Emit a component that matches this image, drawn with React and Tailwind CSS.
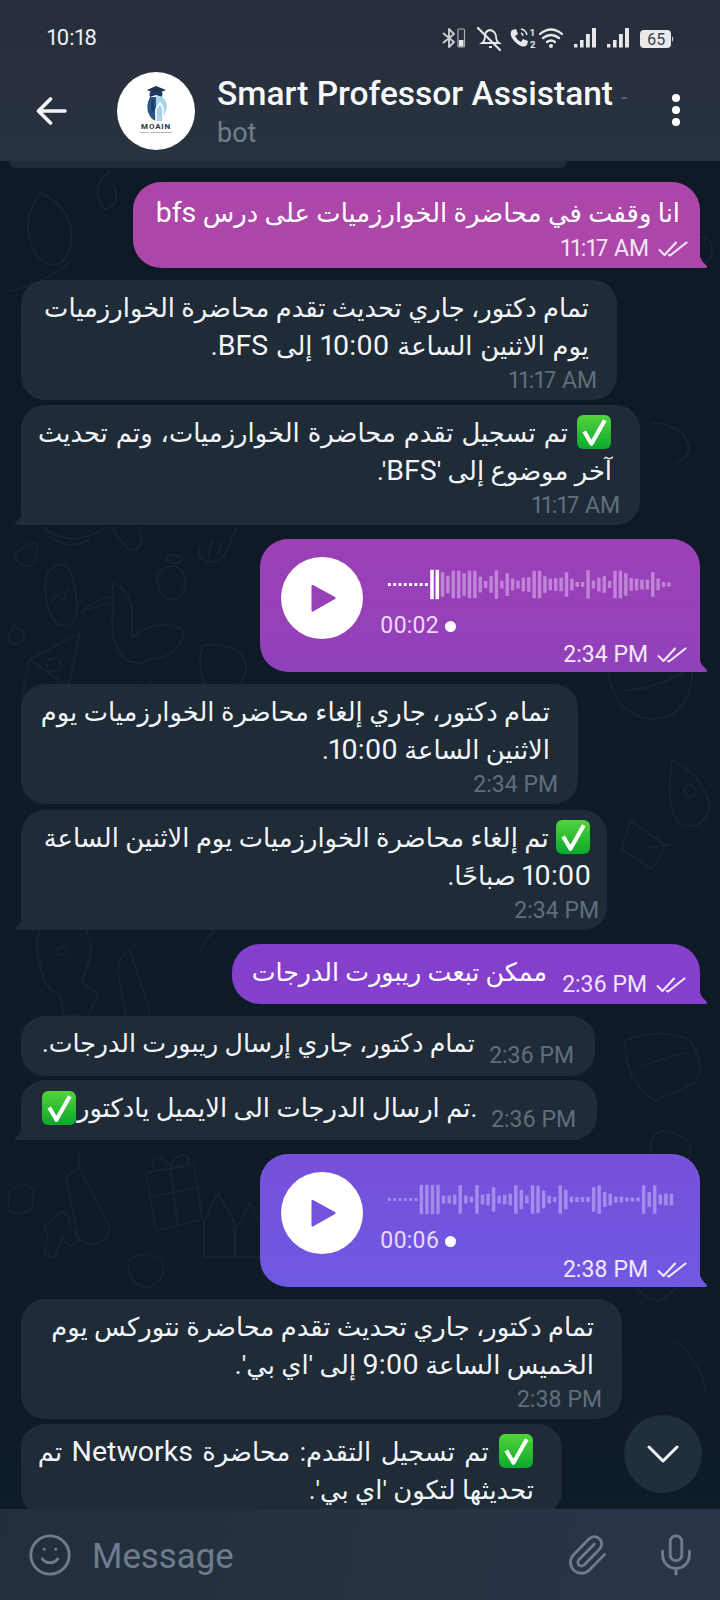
import React from "react";
import { Smile, Mic, Paperclip } from "lucide-react";

const F = "font-['Roboto','DejaVu_Sans',sans-serif] proportional-nums";

function L({ children }) {
  return <span className="text-[28.5px]">{children}</span>;
}

function Checks({ color = "#f3e6f6" }) {
  return (
    <svg width="30" height="16" viewBox="0 0 30 16" fill="none" stroke={color} strokeWidth="2.1" strokeLinecap="round" strokeLinejoin="round" className="shrink-0">
      <path d="M1.5 9 L6.5 14 L18 1.5" />
      <path d="M11 14 L12 14.5 L28.5 1.5" />
    </svg>
  );
}

function Done() {
  return (
    <svg width="36" height="36" viewBox="0 0 35 35" className="inline-block align-[-8px] shrink-0">
      <defs>
        <linearGradient id="dg" x1="0" y1="0" x2="0" y2="1">
          <stop offset="0" stopColor="#52d43a" />
          <stop offset="1" stopColor="#0ca82c" />
        </linearGradient>
      </defs>
      <rect x="1" y="1" width="33" height="33" rx="6" fill="url(#dg)" />
      <path d="M8 17 L15 29 L28 6" fill="none" stroke="#fff" strokeWidth="4" strokeLinejoin="round" />
    </svg>
  );
}

function SentTail({ color }) {
  return (
    <svg width="12" height="24" viewBox="0 0 12 24" className="absolute right-[-9px] bottom-0">
      <path d="M0 0 C1 10 4 17 9 21 Q11.5 24 8 24 L0 24 Z" fill={color} />
    </svg>
  );
}

function RecvTail() {
  return (
    <svg width="12" height="22" viewBox="0 0 12 22" className="absolute left-[-8px] bottom-0">
      <path d="M12 0 C11 9 8 15 3 19 Q0 22 4 22 L12 22 Z" fill="#1f2b37" />
    </svg>
  );
}

function Time({ children, className = "" }) {
  return <span className={`text-[23px] leading-[26px] whitespace-nowrap ${className}`}>{children}</span>;
}

function Recv({ w, mt, lines, time, tail, pr = "pr-[20px]" }) {
  return (
    <div className={`relative ${w} ${mt} ml-[21px] bg-[#1f2b37] rounded-[24px] ${tail ? "rounded-bl-[4px]" : ""} pl-[22px] ${pr} pt-[9px] pb-[6px]`}>
      {lines.map((l, i) => (
        <div key={i} dir="rtl" className="pr-[8px] text-[25.8px] leading-[38px] text-[#f2f5f7] whitespace-nowrap">{l}</div>
      ))}
      {time && (
        <div className="mt-[3px] flex justify-end">
          <Time className="text-[#5f6f7d]">{time}</Time>
        </div>
      )}
      {tail && <RecvTail />}
    </div>
  );
}

function Recv1({ w, mt, children, time, tail }) {
  return (
    <div className={`relative ${w} ${mt} ml-[21px] h-[60px] bg-[#1f2b37] rounded-[24px] ${tail ? "rounded-bl-[4px]" : ""} pl-[21px] pr-[21px] flex items-start justify-between`}>
      <div className="leading-[38px] text-[#f2f5f7] whitespace-nowrap pt-[9px]">{children}</div>
      <Time className="text-[#5f6f7d] pt-[27px]">{time}</Time>
      {tail && <RecvTail />}
    </div>
  );
}

function Wave({ dots, played, bars, fill, dotFill, step }) {
  let x = 10;
  const items = [];
  for (let i = 0; i < dots; i++) {
    items.push(<rect key={"d" + i} x={x} y={23.5} width="3" height="3" fill={dotFill} />);
    x += 5.4;
  }
  played.forEach((h, i) => {
    items.push(<rect key={"p" + i} x={x} y={25 - h / 2} width="3.6" height={h} fill="#ffffff" />);
    x += 5.4;
  });
  bars.forEach((h, i) => {
    items.push(<rect key={"b" + i} x={x} y={25 - h / 2} width="3.5" height={h} fill={fill} />);
    x += step;
  });
  return (
    <svg width="310" height="50" viewBox="0 0 310 50" className="block">{items}</svg>
  );
}

function Voice({ mt, bg, tail, playColor, meta, dur, wave, durColor }) {
  return (
    <div className={`relative ${mt} ml-[260px] w-[440px] h-[133px] rounded-[28px] rounded-br-[4px] ${bg} pl-[21px] pt-[18px]`}>
      <div className="flex h-[82px]">
        <div className="w-[82px] h-[82px] rounded-full bg-white flex items-center justify-center shrink-0">
          <svg width="28" height="32" viewBox="0 0 28 32" className="ml-[4px]">
            <path d="M3 3 L25 15 Q26.5 16 25 17 L3 29.5 Q1.5 30 1.5 28.5 L1.5 4 Q1.5 2.5 3 3Z" fill={playColor} />
          </svg>
        </div>
        <div className="ml-[12px] flex flex-col pt-[3px]">
          <Wave {...wave} />
          <div className="mt-[4px] ml-[5px] flex items-center">
            <span className={`text-[23px] leading-[26px] ${durColor}`}>{dur}</span>
            <span className="ml-[6px] w-[11px] h-[11px] rounded-full bg-white" />
          </div>
        </div>
      </div>
      <div className="mt-[3px] mr-[13px] flex justify-end items-center gap-[9px]">
        <Time className="text-[#f4e9f7]">{meta}</Time>
        <Checks />
      </div>
      <SentTail color={tail} />
    </div>
  );
}

function Doodles() {
  return (
    <svg width="720" height="1347" viewBox="0 0 720 1347" className="absolute left-0 top-0" fill="none" stroke="#18242f" strokeWidth="1.6" strokeLinecap="round" strokeLinejoin="round">
      {/* planet & scribbles top */}
      <path d="M40 32 q-22 30 -4 62 q24 22 34 -6 q8 -40 -30 -56z" />
      <path d="M110 10 q-22 16 -6 38 q18 -4 10 -22" />
      <path d="M10 130 q40 -10 60 -30" />
      {/* arcs under bubble */}
      <path d="M42 366 q30 22 62 2 M50 376 q20 14 40 2" />
      <path d="M112 366 q16 28 24 22 q10 -6 2 -24" />
      {/* bulb */}
      <path d="M200 386 q-4 10 6 14 q16 4 22 -14 l8 -18 M212 380 l-4 14 M222 380 l-4 14" />
      {/* leaf */}
      <path d="M14 395 q14 -16 22 -12 q4 14 -6 22 q-10 2 -16 -10z" />
      <g transform="translate(0 40)">
        {/* egg */}
        <path d="M62 363 q-20 2 -16 32 q4 30 20 30 q14 -2 10 -30 q-4 -32 -14 -32z" />
        <path d="M52 400 l6 -8 l4 8 l6 -12" />
      </g>
      <g transform="translate(-10 50)">
        {/* flower pot */}
        <path d="M170 360 q12 -10 22 0 q8 12 -2 26 q-14 6 -20 -6 q-6 -12 0 -20z" />
        <path d="M176 348 q4 -8 10 -2 q6 -4 6 4 q-8 6 -16 -2z" />
      </g>
      {/* duck */}
      <g transform="translate(0 50)">
        <path d="M112 372 q18 6 20 30 l0 24 q18 -14 38 -12 q14 2 14 10 q-8 22 -32 24 q-22 10 -32 -6 q-8 -12 -8 -30 l2 -24 q-2 -14 -2 -16z" />
        <path d="M110 386 q-16 4 -28 14 l28 -8" />
        <path d="M142 470 l-4 24 M150 470 l16 26" />
      </g>
      {/* star & pizza */}
      <path d="M14 464 l6 6 l4 -2 l0 10 l-8 6 l-8 -4 l2 -8z" />
      <path d="M30 498 l50 -26 l-12 54 z" />
      <circle cx="54" cy="504" r="7" />
      <path d="M22 536 q4 -26 8 -38" />
      {/* planet near voice */}
      <path d="M204 484 q24 -2 36 8 q14 18 -4 34 q-22 14 -32 -4 q-8 -22 0 -38z" />
      {/* right side */}
      <path d="M660 30 q30 6 40 34" />
      <path d="M690 80 q10 -8 20 0 q6 12 -4 22" />
      <path d="M652 262 q18 0 30 10 q16 20 -6 30" />
      <path d="M672 600 q28 10 38 44 q-6 26 -28 20 q-18 -14 -10 -64z" />
      <circle cx="690" cy="630" r="6" />
      <path d="M630 660 l36 24 l-14 24 l-30 -20z" />
      <path d="M650 686 l20 -2" />
      {/* lamp, ball right */}
      <path d="M615 480 q40 -14 70 10 q18 30 -8 60 q-30 18 -56 -6 q-22 -32 -6 -64z" />
      <path d="M624 530 q40 -4 68 -24" />
      {/* dinosaur */}
      <path d="M40 770 q12 -16 32 -12 q22 8 18 38 l-8 26 l16 10 l-10 24 l-24 -2 l-4 -20 q-16 -6 -20 -30 q-6 -22 0 -34z" />
      <circle cx="62" cy="790" r="4" />
      <path d="M20 870 q24 -14 38 0" />
      {/* center toy under grades */}
      <path d="M130 790 l18 54 q4 14 -8 18 l-14 -4 l-8 -48 q0 -16 12 -20z" />
      <path d="M200 790 q20 -40 70 -50" />
      {/* pizza right */}
      <path d="M625 880 q30 -14 64 -2 q18 24 6 44 l-40 18 q-30 -20 -30 -60z" />
      <path d="M644 904 l40 -12" />
      <path d="M660 970 q-16 10 -6 28 q4 12 4 22 l20 0 q6 -14 12 -24 q6 -22 -30 -26z" />
      {/* gift */}
      <path d="M146 1012 l48 -10 l8 56 l-46 12z M170 1006 l8 60 M148 1036 l52 -10" />
      <path d="M170 1004 q-14 -14 -18 0 q4 8 18 4 q6 -18 18 -12 q4 10 -18 12" />
      {/* marker */}
      <path d="M78 1005 l28 54 q8 16 -6 22 q-14 6 -22 -6 l-12 -58z" />
      <path d="M80 1006 l-2 -14" />
      {/* cake */}
      <path d="M10 1030 q14 -12 24 0 l-2 18 q-12 8 -24 2z" />
      <path d="M44 1065 l12 -10 q6 -8 12 0 l2 10 l10 14 l-10 6 l-8 -8 l-8 20 l-10 -4 l4 -18z" />
      {/* castle */}
      <path d="M204 1060 l14 -28 l16 28 l0 36 l-30 0z M236 1068 l14 -26 l14 26 l0 28 l-28 0z" />
      {/* planet small */}
      <path d="M128 1100 q18 -14 34 0 q6 18 -12 26 q-22 0 -22 -26z" />
      {/* bottom right */}
      <path d="M640 1060 q30 10 40 40 q8 26 -22 40 q-26 -6 -30 -34 q0 -26 12 -46z" />
      <path d="M676 1180 q24 20 30 50" />
    </svg>
  );
}

function StatusIcons() {
  return (
    <svg width="240" height="26" viewBox="0 0 240 26" className="block" fill="none">
      {/* bluetooth + small battery */}
      <path d="M3 8 L14 17 L9 22 L9 4 L14 9 L3 18" stroke="#c9ced3" strokeWidth="1.9" strokeLinejoin="round" />
      <rect x="18" y="4" width="6.5" height="18" rx="1" stroke="#a9afb6" strokeWidth="1.2" />
      <rect x="19" y="15" width="4.5" height="6.5" fill="#e6e8ea" />
      {/* bell off */}
      <path d="M42 18 q3 -2 3 -7 q0 -5 5 -6 q5 1 6 6 q0 5 3 7z" stroke="#e6e8ea" strokeWidth="1.8" />
      <path d="M38 3 L60 25" stroke="#e6e8ea" strokeWidth="2.2" strokeLinecap="round" />
      <path d="M49 22 h3" stroke="#e6e8ea" strokeWidth="2" />
      {/* phone */}
      <path d="M72 5 l4 -1 l2 5 l-3 2 q2 4 6 6 l2 -3 l5 2 l-1 4 q-3 3 -8 0 q-6 -4 -8 -9 q-1 -4 1 -6z" fill="#e6e8ea" />
      <path d="M81 4 q5 1 6 6 M81 8 q2 1 2 3" stroke="#e6e8ea" strokeWidth="1.4" />
      <text x="90" y="11" fontSize="9.5" fontWeight="700" fill="#e6e8ea" fontFamily="Roboto">1</text>
      <text x="90" y="23" fontSize="9.5" fontWeight="700" fill="#e6e8ea" fontFamily="Roboto">2</text>
      {/* wifi */}
      <path d="M100 9 q11 -9 22 0 M103 13 q8 -6 16 0 M107 17 q4 -3 8 0" stroke="#e6e8ea" strokeWidth="2.2" strokeLinecap="round" />
      <circle cx="111" cy="21" r="2" fill="#e6e8ea" />
      {/* signal */}
      <g fill="#e6e8ea">
        <rect x="134" y="19" width="3.4" height="3.5" />
        <rect x="140" y="15" width="3.6" height="7.5" />
        <rect x="146" y="9" width="3.8" height="13.5" />
        <rect x="152" y="3" width="4" height="19.5" />
        <rect x="167" y="19" width="3.4" height="3.5" />
        <rect x="173" y="15" width="3.6" height="7.5" />
        <rect x="179" y="9" width="3.8" height="13.5" />
        <rect x="185" y="3" width="4" height="19.5" />
      </g>
      {/* battery */}
      <rect x="200" y="5" width="31" height="18" rx="4" fill="#e8eaec" />
      <path d="M232 11 q2.5 3 0 6z" fill="#c9cdd1" />
      <text x="207" y="20" fontSize="16" fill="#3a4048" fontFamily="Roboto">65</text>
    </svg>
  );
}

function Logo() {
  return (
    <div className="w-[78px] h-[78px] rounded-full bg-white flex flex-col items-center pt-[13px] shrink-0 overflow-hidden">
      <svg width="26" height="37" viewBox="0 0 26 37" className="block">
        <path d="M4 5 L13 1 L23 5 L13 9 Z" fill="#1b3350" />
        <path d="M7 7 q-1 3 0 5 L13 10 L19 12 q1 -3 0 -5z" fill="#1f3a5c" />
        <path d="M7 12 q-4 8 -2 15 q3 8 8 9 l0 -24z" fill="#2b5487" />
        <path d="M9 14 q-2 6 0 12 l2 0 l0 -12z" fill="#1d3d68" />
        <path d="M13 11 q8 -1 10 6 q2 6 -1 11 l-3 8 l-6 0z" fill="#a9d3e8" />
        <path d="M13 24 l4 -6 l3 5 l0 13 M13 24 l0 12" stroke="#fff" strokeWidth="1.6" fill="none" />
      </svg>
      <div className="text-[8px] leading-[9px] tracking-[0.8px] font-bold text-[#2b3646] font-['Roboto',sans-serif]">MOAIN</div>
      <div className="text-[2.5px] leading-[4px] text-[#44506a] whitespace-nowrap font-['Roboto',sans-serif]">Smart & Professor Assistant</div>
    </div>
  );
}

const w1 = [25,18,28,28,23,28,28,16,7,17,29,8,23,12,8,14,15,28,28,17,12,13,14,25,12,5,5,29,8,14,17,7,28,28,23,13,12,10,10,25,12,5,4];
const w2 = [30,30,30,30,8,8,10,29,8,6,29,10,12,25,8,10,12,29,20,8,29,28,18,8,5,29,20,6,5,5,5,25,29,15,12,6,6,4,4,4,29,15,29,10,12,12];

export default function App() {
  return (
    <div className={`w-[720px] h-[1600px] flex flex-col overflow-hidden bg-[#0f1a25] ${F}`}>
      <header className="h-[161px] shrink-0 bg-[linear-gradient(180deg,#262e3b,#29323f)] relative z-10">
        <div className="h-[72px] flex items-start pl-[47px] pr-[40px] pt-[24px] justify-between">
          <span className="text-[22px] leading-[28px] text-[#eef0f2]">10:18</span>
          <div className="mt-[1px] ml-auto"><StatusIcons /></div>
        </div>
        <div className="flex items-start">
          <svg width="31" height="28" viewBox="0 0 31 28" fill="none" stroke="#f4f6f8" strokeWidth="3.6" strokeLinecap="round" strokeLinejoin="round" className="ml-[36px] mt-[25px] shrink-0">
            <path d="M3 14 H29 M14.5 2 L2.5 14 L14.5 26" />
          </svg>
          <div className="ml-[50px]"><Logo /></div>
          <div className="ml-[22px] -mt-[2px]">
            <div className="flex items-baseline w-[420px]">
              <span className="text-[33.5px] leading-[48px] font-medium text-[#f5f7f9] whitespace-nowrap">Smart Professor Assistant</span>
              <span className="ml-[8px] text-[24px] text-[#59636f]">-</span>
            </div>
            <div className="text-[27px] leading-[30px] text-[#6f7f8e]">bot</div>
          </div>
          <div className="ml-auto mr-[40px] mt-[22px] flex flex-col gap-[4px]">
            <span className="w-[8px] h-[8px] rounded-full bg-white" />
            <span className="w-[8px] h-[8px] rounded-full bg-white" />
            <span className="w-[8px] h-[8px] rounded-full bg-white" />
          </div>
        </div>
      </header>

      <main className="relative flex-1 min-h-0 overflow-hidden bg-[linear-gradient(180deg,#0f1926,#0e1c27)]">
        <Doodles />
        <div className="relative flex flex-col">
          <div className="ml-[9px] w-[558px] h-[7px] bg-[#1f2b37] rounded-b-[16px]" />

          <div className="relative mt-[14px] ml-[133px] w-[567px] h-[86px] rounded-[28px] rounded-br-[4px] bg-[linear-gradient(180deg,#ad46aa,#ac47a9)] pt-[12px] pl-[22px] pr-[20px]">
            <div dir="rtl" className="text-[25.8px] leading-[38px] text-white whitespace-nowrap">انا وقفت في محاضرة الخوارزميات على درس <L>bfs</L></div>
            <div className="mt-[4px] mr-[-8px] flex justify-end items-center gap-[9px]">
              <Time className="text-[#f6e6f4]">11:17 AM</Time>
              <Checks />
            </div>
            <SentTail color="#ac47a9" />
          </div>

          <Recv w="w-[596px]" mt="mt-[12px]" time="11:17 AM" lines={["تمام دكتور، جاري تحديث تقدم محاضرة الخوارزميات", <span className="[word-spacing:1.5px]">يوم الاثنين الساعة <L>10:00</L> إلى <L>BFS</L>.</span>]} />
          <Recv w="w-[619px]" mt="mt-[5px]" time="11:17 AM" tail lines={[<span className="[word-spacing:1.6px]"><Done /> تم تسجيل تقدم محاضرة الخوارزميات، وتم تحديث</span>, <>آخر موضوع إلى '<L>BFS</L>'.</>]} />

          <Voice mt="mt-[14px]" bg="bg-[linear-gradient(180deg,#9c40b5,#9041bc)]" tail="#9041bc" playColor="#9641b8" dur="00:02" meta="2:34 PM" durColor="text-[#efd9f4]"
            wave={{ dots: 8, played: [30, 30], bars: w1, fill: "#c184d8", dotFill: "#ffffff", step: 5.5 }} />

          <Recv w="w-[557px]" mt="mt-[12px]" time="2:34 PM" lines={["تمام دكتور، جاري إلغاء محاضرة الخوارزميات يوم", <>الاثنين الساعة <L>10:00</L>.</>]} />
          <Recv w="w-[586px]" mt="mt-[6px]" pr="pr-[8px]" time="2:34 PM" tail lines={[<><Done /> تم إلغاء محاضرة الخوارزميات يوم الاثنين الساعة</>, <><L>10:00</L> صباحًا.</>]} />

          <div className="relative mt-[14px] ml-[232px] w-[468px] h-[60px] rounded-[28px] rounded-br-[4px] bg-[#8440cc] flex items-start pl-[23px] pr-[14px]">
            <div dir="rtl" className="text-[25.3px] leading-[38px] text-white whitespace-nowrap pt-[10px] w-[292px]">ممكن تبعت ريبورت الدرجات</div>
            <div className="ml-auto pt-[28px] flex items-center gap-[9px]">
              <Time className="text-[#f0e4fa]">2:36 PM</Time>
              <Checks />
            </div>
            <SentTail color="#8440cc" />
          </div>

          <Recv1 w="w-[574px]" mt="mt-[12px]" time="2:36 PM">
            <span dir="rtl" className="block text-[25.3px]">تمام دكتور، جاري إرسال ريبورت الدرجات.</span>
          </Recv1>
          <Recv1 w="w-[576px]" mt="mt-[4px]" time="2:36 PM" tail>
            <span dir="ltr" className="flex items-center -ml-[1px] text-[25.8px]"><Done /><span>تم ارسال الدرجات الى الايميل يادكتور</span><span>.</span></span>
          </Recv1>

          <Voice mt="mt-[14px]" bg="bg-[linear-gradient(180deg,#7650d8,#6f58e4)]" tail="#6f58e4" playColor="#7452dc" dur="00:06" meta="2:38 PM" durColor="text-[#e4dcfa]"
            wave={{ dots: 6, played: [], bars: w2, fill: "#a58bec", dotFill: "#a58bec", step: 5.67 }} />

          <Recv w="w-[601px]" mt="mt-[12px]" time="2:38 PM" lines={["تمام دكتور، جاري تحديث تقدم محاضرة نتوركس يوم", <>الخميس الساعة <L>9:00</L> إلى 'اي بي'.</>]} />
          <Recv w="w-[541px]" mt="mt-[5px]" lines={[<span className="[word-spacing:3px]"><Done /> تم تسجيل التقدم: محاضرة <L>Networks</L> تم</span>, "تحديثها لتكون 'اي بي'."]} />
        </div>
        <button className="absolute left-[624px] top-[1254px] w-[78px] h-[78px] rounded-full bg-[#212e3b] flex items-center justify-center">
          <svg width="32" height="18" viewBox="0 0 32 18" fill="none" stroke="#f2f5f7" strokeWidth="3" strokeLinecap="round" strokeLinejoin="round">
            <path d="M2 2 L16 16 L30 2" />
          </svg>
        </button>
      </main>

      <footer className="h-[91px] shrink-0 bg-[linear-gradient(100deg,#232e3b,#2a3548)] flex items-center pl-[27px] pr-[21px] relative z-10">
        <Smile size={46} color="#6d7d8d" strokeWidth={1.5} />
        <span className="ml-[19px] pt-[3px] text-[34.8px] text-[#6d7d8d]">Message</span>
        <Paperclip size={44} color="#6d7d8d" strokeWidth={1.5} className="ml-auto" />
        <Mic size={46} color="#6d7d8d" strokeWidth={1.5} className="ml-[44px]" />
      </footer>
    </div>
  );
}
